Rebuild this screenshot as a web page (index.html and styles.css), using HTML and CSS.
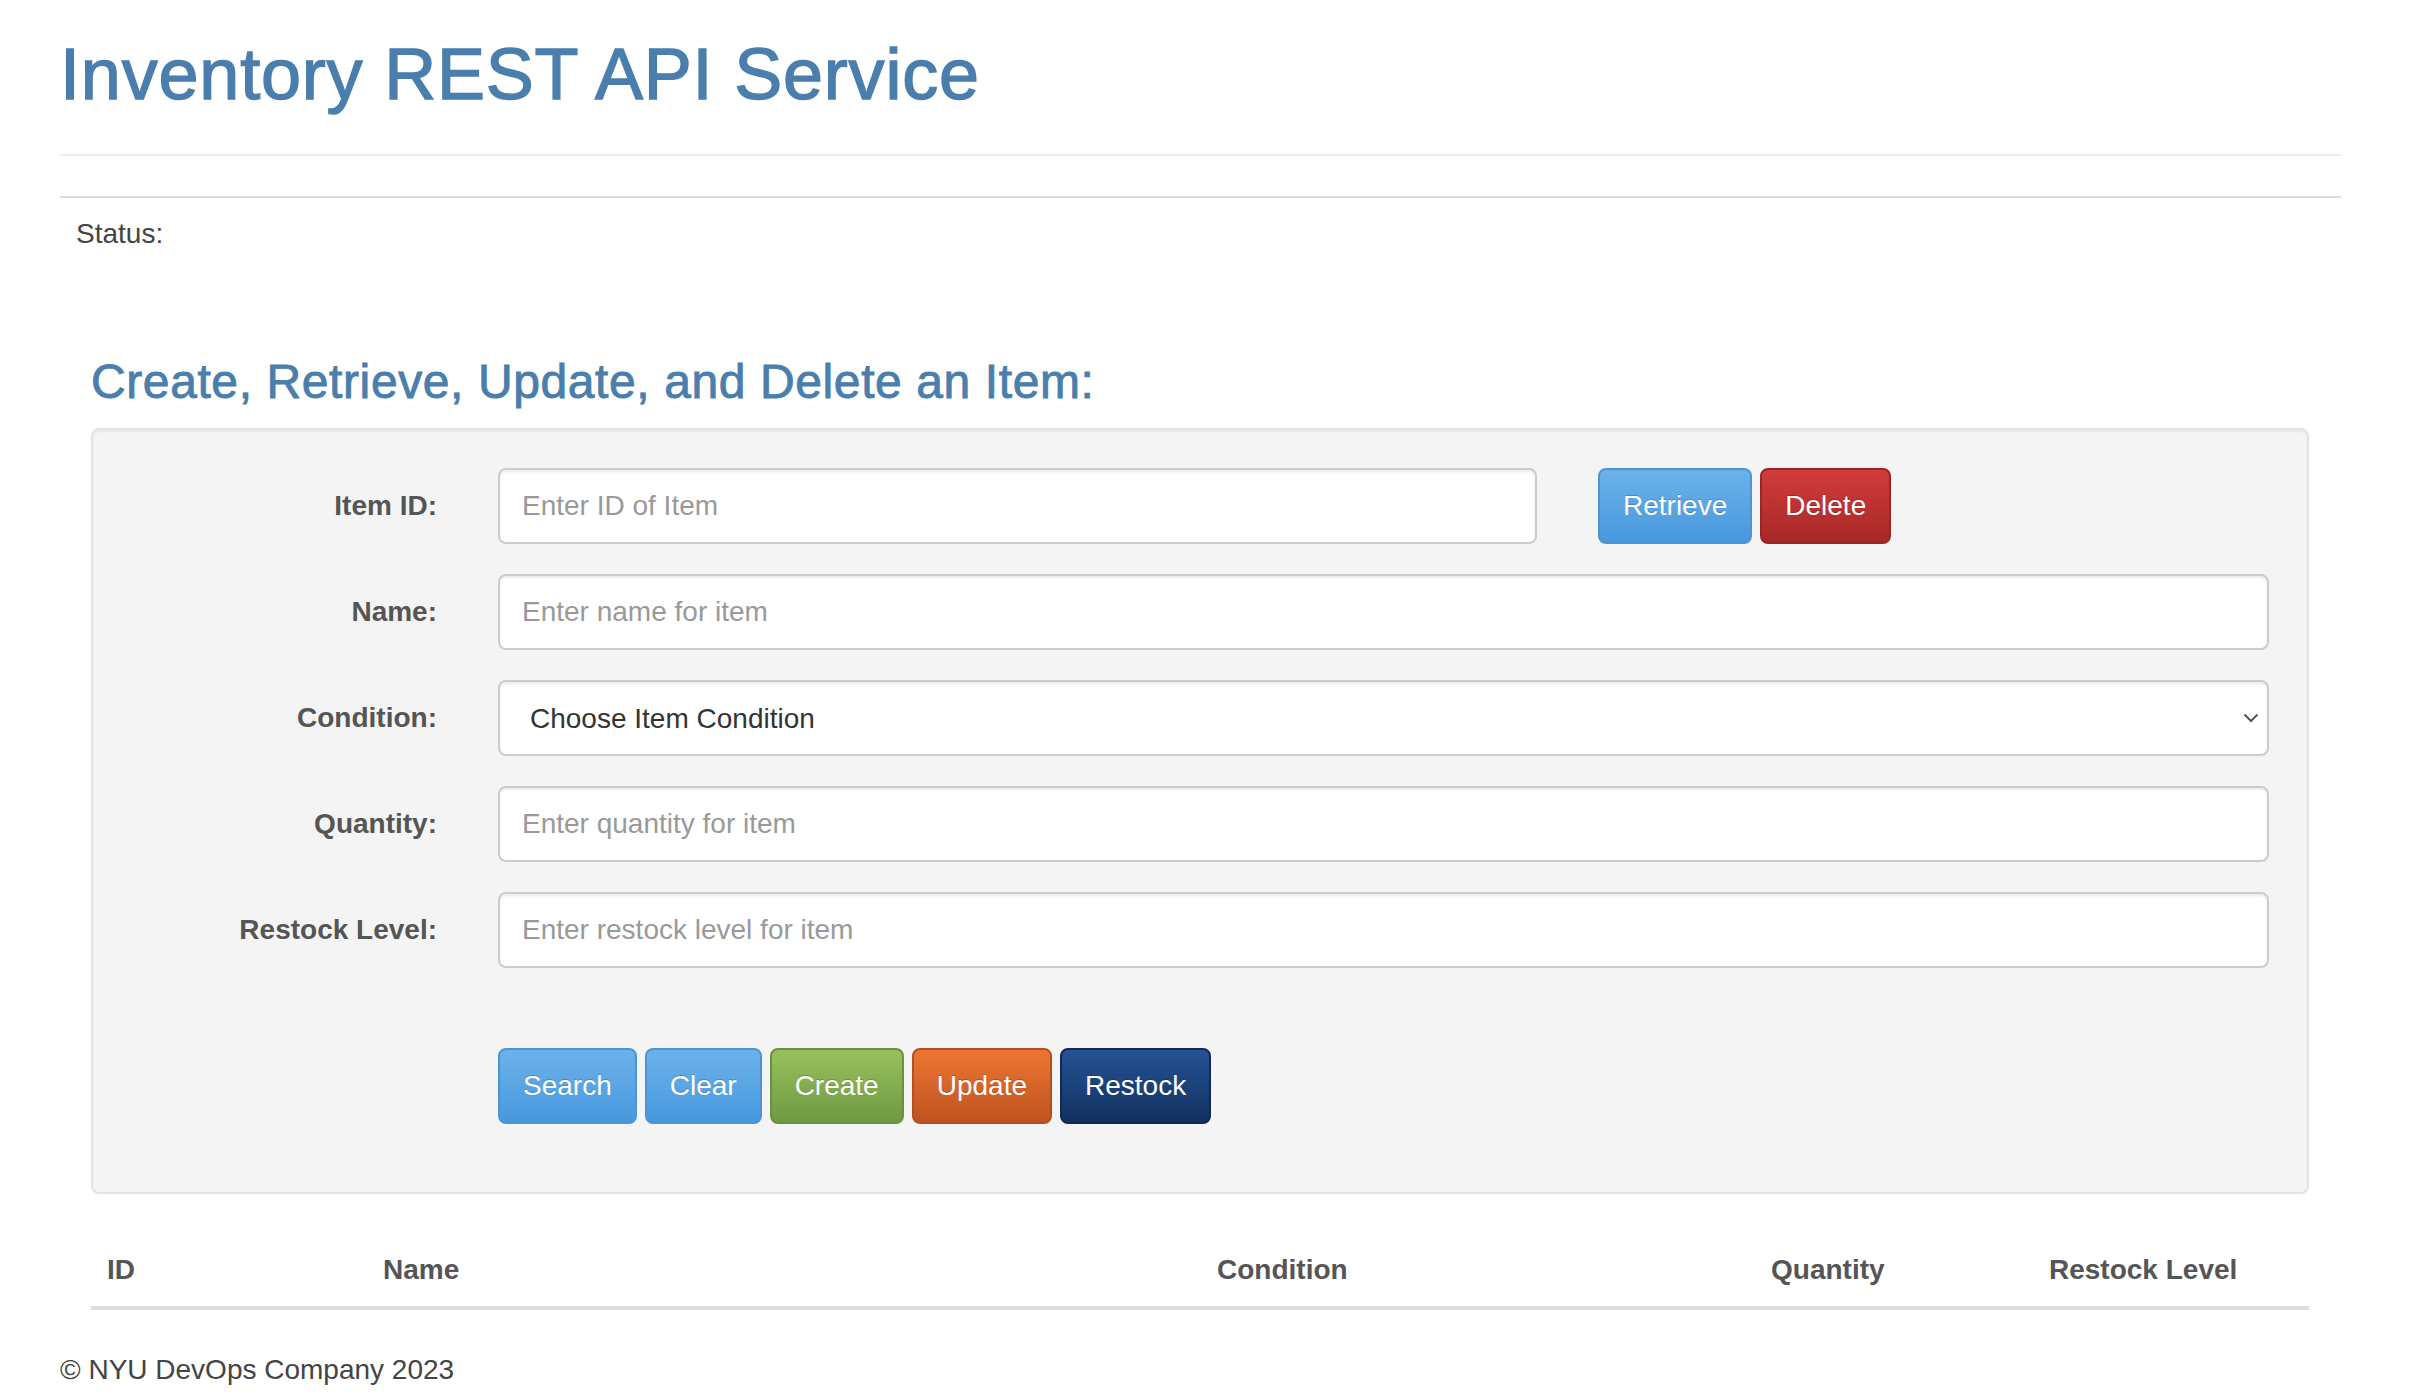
FILE: index.html
```html
<!DOCTYPE html>
<html lang="en">
<head>
<meta charset="utf-8">
<title>Inventory REST API Service</title>
<link rel="stylesheet" href="styles.css">
</head>
<body>
<div class="container">
  <div class="page-header">
    <h1 class="title">Inventory REST API Service</h1>
  </div>
  <hr class="divider">
  <div class="status">Status:</div>

  <div class="section">
    <h3 class="section-title">Create, Retrieve, Update, and Delete an Item:</h3>
    <div class="well">
      <div class="form-row">
        <label class="field-label" for="item_id">Item ID:</label>
        <input class="field field-half" id="item_id" type="text" placeholder="Enter ID of Item">
        <div class="row-actions">
          <button class="btn btn-blue">Retrieve</button>
          <button class="btn btn-red">Delete</button>
        </div>
      </div>
      <div class="form-row">
        <label class="field-label" for="item_name">Name:</label>
        <input class="field field-full" id="item_name" type="text" placeholder="Enter name for item">
      </div>
      <div class="form-row">
        <label class="field-label" for="item_condition">Condition:</label>
        <div class="select-wrap">
          <select class="field field-select" id="item_condition">
            <option>Choose Item Condition</option>
          </select>
          <svg class="chevron" width="16" height="10" viewBox="0 0 16 10"><path d="M1.5 1.5 L8 8 L14.5 1.5" fill="none" stroke="#555" stroke-width="2"/></svg>
        </div>
      </div>
      <div class="form-row">
        <label class="field-label" for="item_quantity">Quantity:</label>
        <input class="field field-full" id="item_quantity" type="text" placeholder="Enter quantity for item">
      </div>
      <div class="form-row">
        <label class="field-label" for="item_restock">Restock Level:</label>
        <input class="field field-full" id="item_restock" type="text" placeholder="Enter restock level for item">
      </div>
      <div class="form-row button-row">
        <button class="btn btn-blue">Search</button>
        <button class="btn btn-blue">Clear</button>
        <button class="btn btn-green">Create</button>
        <button class="btn btn-orange">Update</button>
        <button class="btn btn-navy">Restock</button>
      </div>
    </div>

    <table class="results">
      <thead>
        <tr>
          <th class="col-id">ID</th>
          <th class="col-name">Name</th>
          <th class="col-cond">Condition</th>
          <th class="col-qty">Quantity</th>
          <th class="col-restock">Restock Level</th>
        </tr>
      </thead>
      <tbody></tbody>
    </table>
  </div>

  <footer class="footer">&copy; NYU DevOps Company 2023</footer>
</div>
</body>
</html>
```

FILE: styles.css
```css
html, body {
  margin: 0;
  padding: 0;
  background: #fff;
}
body {
  font-family: "Liberation Sans", Arial, Helvetica, sans-serif;
  font-size: 28px;
  line-height: 40px;
  color: #444;
}
.container {
  margin-left: 60px;
  width: 2281px;
}
.page-header {
  padding-bottom: 40px;
  border-bottom: 2px solid #eee;
}
.title {
  margin: 35px 0 0;
  font-size: 72px;
  line-height: 79px;
  font-weight: 500;
  color: #4a7eac;
  letter-spacing: 0.8px;
  -webkit-text-stroke: 1.4px #4a7eac;
}
.divider {
  margin: 40px 0 0;
  border: 0;
  border-top: 2px solid #ddd;
  height: 0;
}
.status {
  margin-top: 16px;
  padding-left: 16px;
  height: 40px;
  color: #444;
}
.section {
  padding: 0 32px 0 31px;
}
.section-title {
  margin: 101px 0 20px;
  font-size: 48px;
  line-height: 53px;
  font-weight: 500;
  color: #4a7eac;
  letter-spacing: 0.6px;
  -webkit-text-stroke: 0.9px #4a7eac;
}
.well {
  background: #f4f4f4;
  border: 2px solid #e3e3e3;
  border-radius: 8px;
  padding: 38px;
  box-shadow: inset 0 2px 2px rgba(0, 0, 0, 0.05);
  margin-bottom: 40px;
}
.form-row {
  display: flex;
  align-items: center;
  margin-bottom: 30px;
}
.field-label {
  width: 306px;
  margin-right: 61px;
  text-align: right;
  font-weight: bold;
  color: #555;
  flex: none;
}
.field {
  box-sizing: border-box;
  height: 76px;
  border: 2px solid #ccc;
  border-radius: 8px;
  background: #fff;
  padding: 0 22px;
  font-family: "Liberation Sans", Arial, Helvetica, sans-serif;
  font-size: 28px;
  color: #333;
  box-shadow: inset 0 2px 2px rgba(0, 0, 0, 0.075);
  outline: none;
}
.field::placeholder {
  color: #999;
}
.field-half {
  width: 1039px;
  flex: none;
}
.field-full {
  flex: 1;
  min-width: 0;
}
.select-wrap {
  position: relative;
  flex: 1;
  display: flex;
}
.field-select {
  flex: 1;
  -webkit-appearance: none;
  appearance: none;
  padding-left: 30px;
  color: #333;
}
.chevron {
  position: absolute;
  right: 10px;
  top: 33px;
  pointer-events: none;
}
.row-actions {
  margin-left: 61px;
  display: flex;
  gap: 8px;
}
.button-row {
  margin-top: 80px;
  padding-left: 367px;
  gap: 8px;
}
.btn {
  box-sizing: border-box;
  height: 76px;
  padding: 0 23px;
  border: 2px solid transparent;
  border-radius: 8px;
  font-family: "Liberation Sans", Arial, Helvetica, sans-serif;
  font-size: 28px;
  line-height: 72px;
  color: #fff;
  text-shadow: 0 -1px 0 rgba(0, 0, 0, 0.2);
  cursor: pointer;
}
.btn-blue {
  background: linear-gradient(#6cb2e9, #4898de);
  border-color: #4b95d6;
}
.btn-red {
  background: linear-gradient(#d03d3b, #a72827);
  border-color: #9c2524;
}
.btn-green {
  background: linear-gradient(#98c15d, #6f9942);
  border-color: #6a913f;
}
.btn-orange {
  background: linear-gradient(#ed7534, #bf531f);
  border-color: #b54f1f;
}
.btn-navy {
  background: linear-gradient(#245395, #13305f);
  border-color: #112a55;
}
.results {
  width: 2218px;
  border-collapse: collapse;
  margin-bottom: 40px;
  table-layout: fixed;
}
.results th {
  box-sizing: border-box;
  text-align: left;
  padding: 16px;
  line-height: 40px;
  font-weight: bold;
  color: #555;
  border-bottom: 4px solid #ddd;
  vertical-align: bottom;
}
.col-id { width: 276px; }
.col-name { width: 834px; }
.col-cond { width: 554px; }
.col-qty { width: 278px; }
.col-restock { width: auto; }
.footer {
  color: #444;
  line-height: 40px;
}
```
